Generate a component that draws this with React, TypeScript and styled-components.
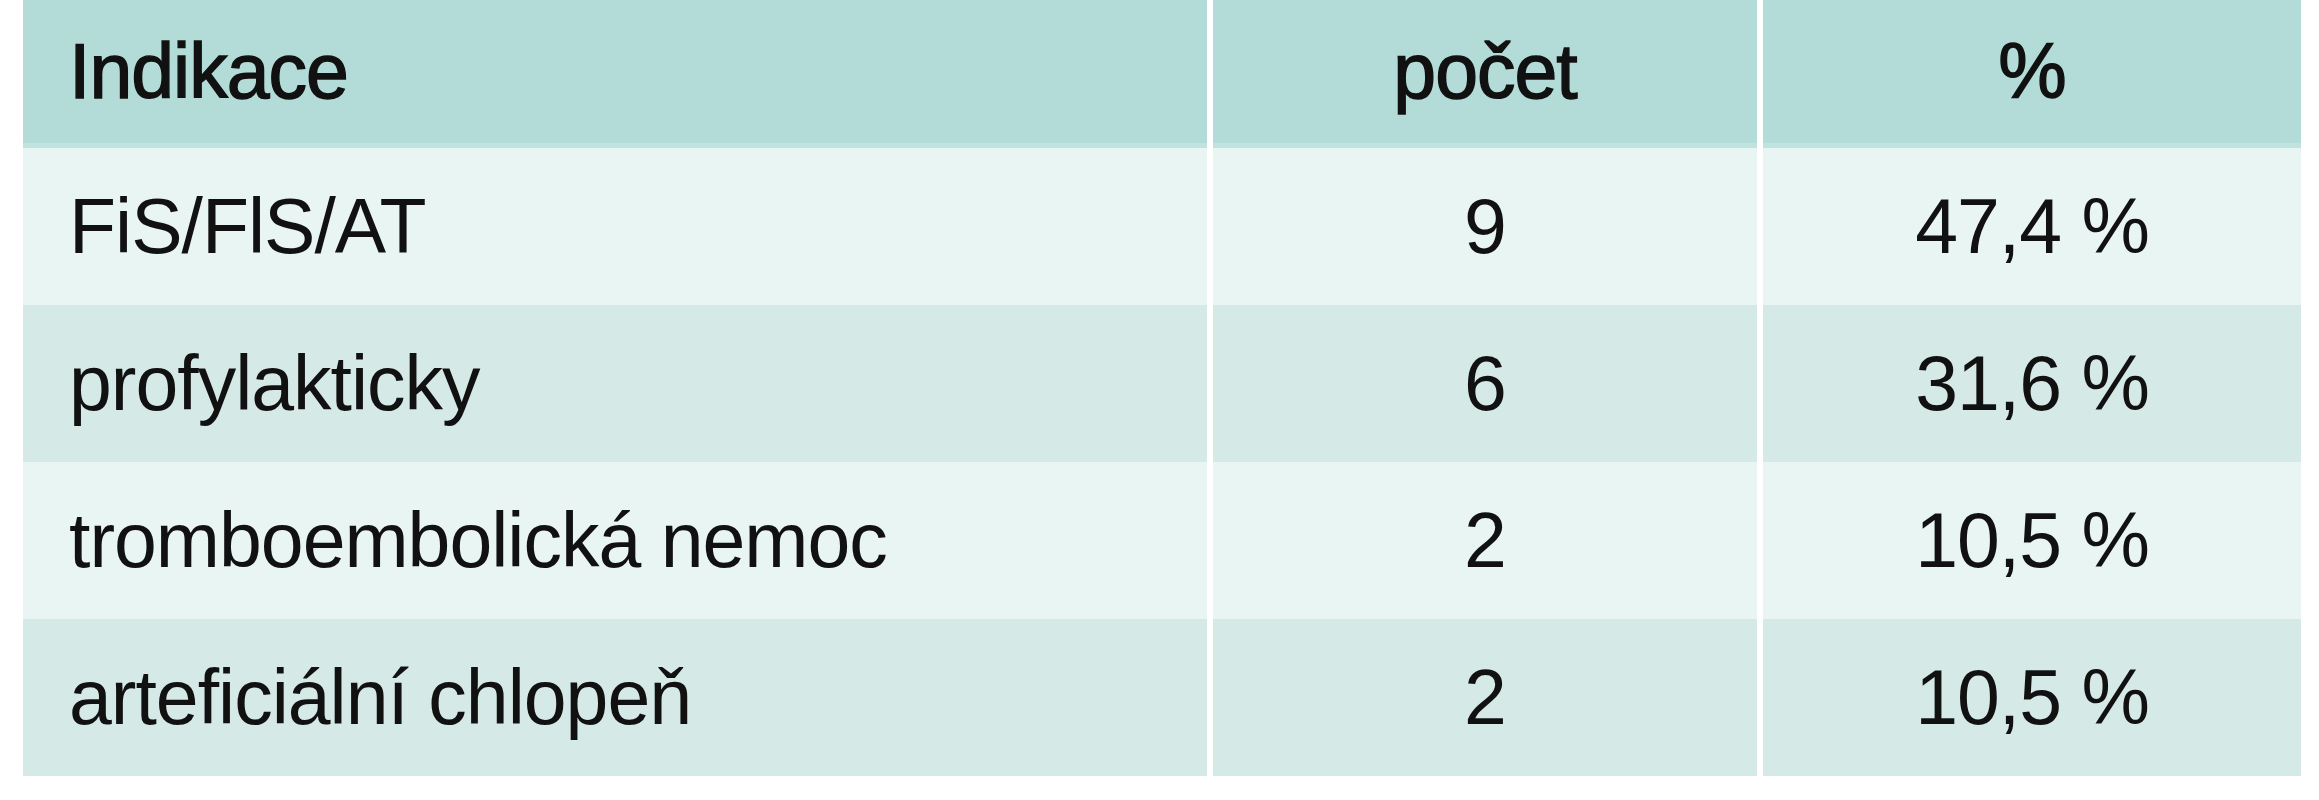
import styled, { createGlobalStyle } from "styled-components";

const GlobalStyle = createGlobalStyle`
  html, body {
    margin: 0;
    padding: 0;
    background: #ffffff;
  }
  body {
    font-family: "Liberation Sans", Arial, sans-serif;
    color: #111111;
  }
`;

type RowData = {
  label: string;
  count: string;
  percent: string;
};

const rows: RowData[] = [
  { label: "FiS/FlS/AT", count: "9", percent: "47,4 %" },
  { label: "profylakticky", count: "6", percent: "31,6 %" },
  { label: "tromboembolická nemoc", count: "2", percent: "10,5 %" },
  { label: "arteficiální chlopeň", count: "2", percent: "10,5 %" },
];

function App() {
  return (
    <>
      <GlobalStyle />
      <Page>
        <Table>
          <HeadRow>
            <Cell $align="left">
              <HeadText>Indikace</HeadText>
            </Cell>
            <Cell $align="center">
              <HeadText>počet</HeadText>
            </Cell>
            <Cell $align="center">
              <HeadText>%</HeadText>
            </Cell>
          </HeadRow>
          {rows.map((row, i) => (
            <BodyRow key={row.label} $striped={i % 2 === 1}>
              <Cell $align="left">{row.label}</Cell>
              <Cell $align="center">{row.count}</Cell>
              <Cell $align="center">{row.percent}</Cell>
            </BodyRow>
          ))}
        </Table>
      </Page>
    </>
  );
}

export default App;

const Page = styled.div`
  width: 2319px;
  height: 800px;
  padding-left: 23px;
  box-sizing: border-box;
`;

const Table = styled.div`
  width: 2278px;
  display: flex;
  flex-direction: column;
`;

const RowBase = styled.div`
  display: grid;
  grid-template-columns: 1184px 544px 538px;
  column-gap: 6px;
  background: #ffffff;
`;

const HeadRow = styled(RowBase)`
  height: 148px;
  box-sizing: border-box;

  & > div {
    background: #b3dcd8;
    border-bottom: 5px solid #c0e3df;
  }
`;

const BodyRow = styled(RowBase)<{ $striped: boolean }>`
  height: 157px;

  & > div {
    background: ${({ $striped }) => ($striped ? "#d5eae7" : "#e8f5f3")};
  }
`;

const Cell = styled.div<{ $align: "left" | "center" }>`
  display: flex;
  align-items: center;
  justify-content: ${({ $align }) => ($align === "left" ? "flex-start" : "center")};
  padding-left: ${({ $align }) => ($align === "left" ? "46px" : "0")};
  font-size: 77px;
  letter-spacing: -1px;
  line-height: 1;
  white-space: nowrap;
  box-sizing: border-box;
`;

const HeadText = styled.span`
  -webkit-text-stroke: 1.4px #111111;
`;
